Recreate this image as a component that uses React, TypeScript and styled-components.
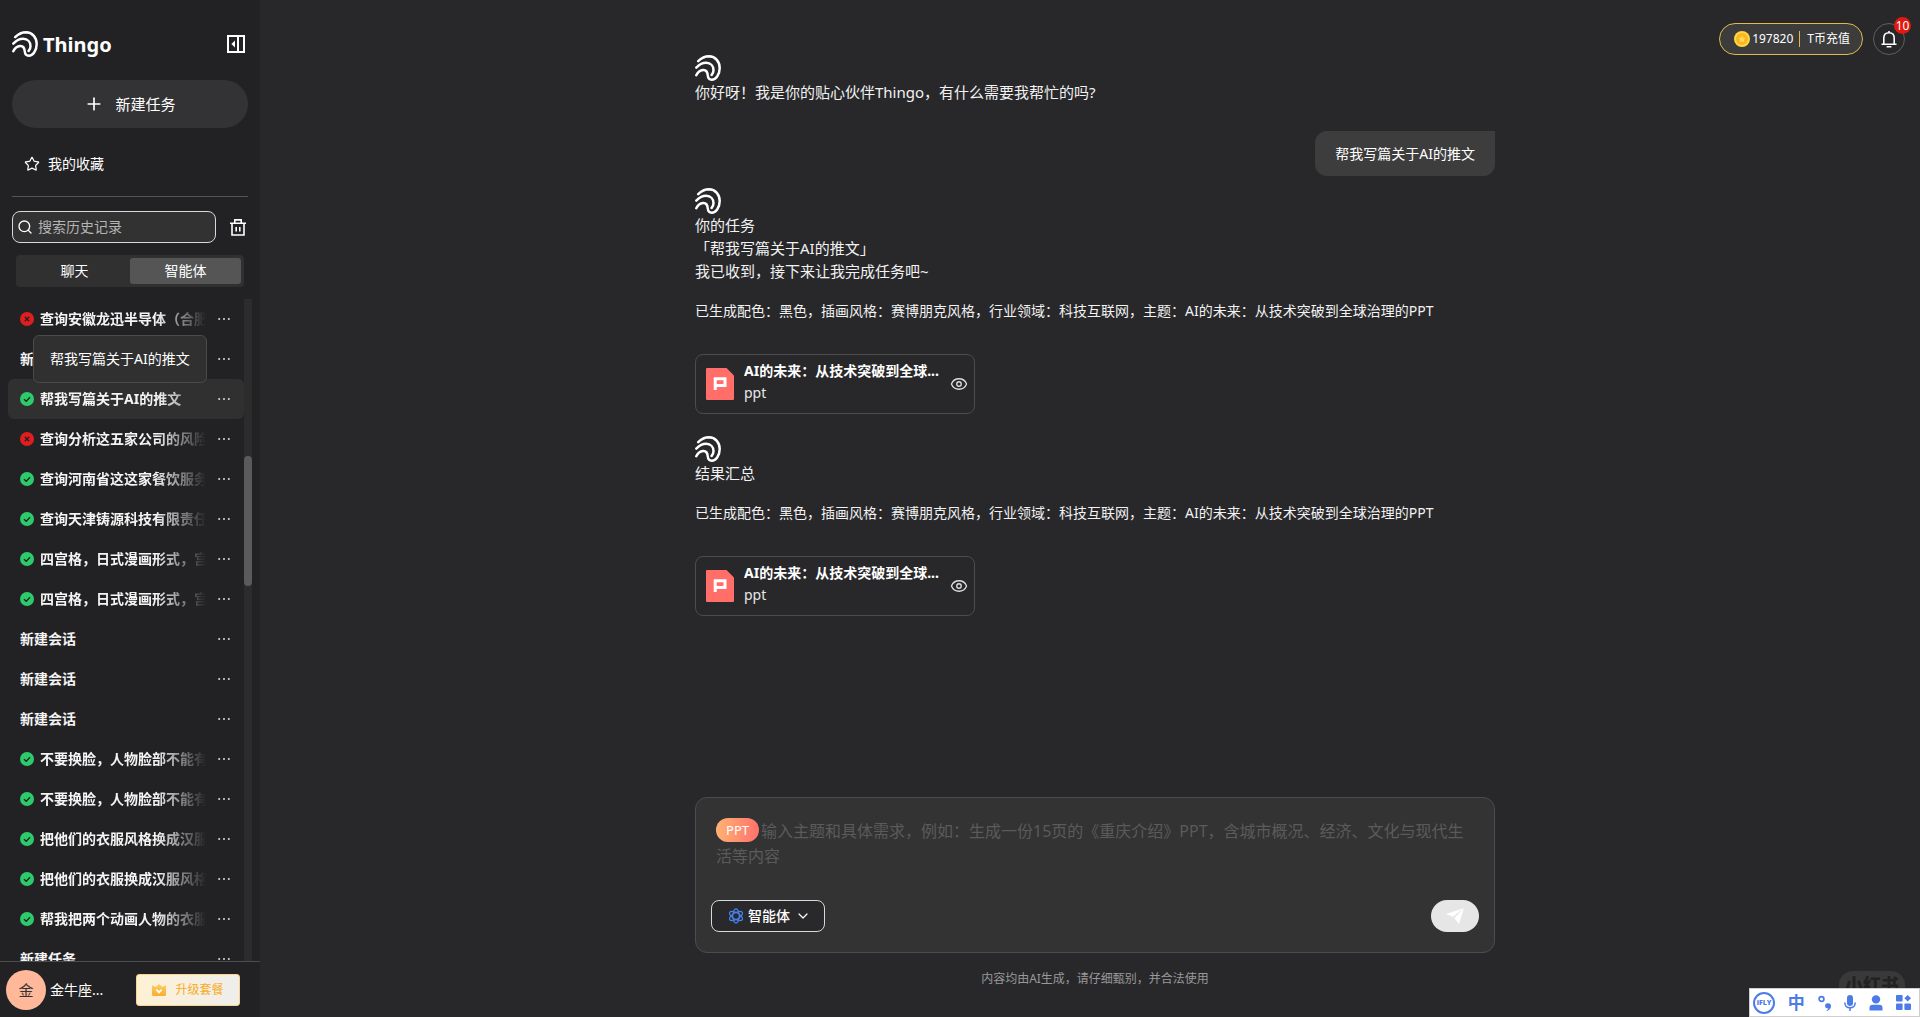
import React from 'react';
import styled, { createGlobalStyle, css } from 'styled-components';
import { ChevronDown, Eye, Plus, Search, Star } from 'lucide-react';

const GlobalStyle = createGlobalStyle`
  *, *::before, *::after { box-sizing: border-box; }
  body {
    margin: 0;
    background: #28282a;
    color: #fff;
    font: 14px/22px "Noto Sans", "Noto Sans CJK SC", sans-serif;
  }
  button, input, select, textarea { font: inherit; color: inherit; }
  button { border: 0; padding: 0; background: none; cursor: pointer; }
  p, h1, ul { margin: 0; padding: 0; }
`;

/* ---------- shell ---------- */

const Shell = styled.div`
  display: flex;
  height: 100vh;
  overflow: hidden;
`;

const Sidebar = styled.aside`
  display: flex;
  flex-direction: column;
  flex: none;
  width: 260px;
  background: #222224;
`;

const Main = styled.main`
  position: relative;
  display: flex;
  flex: 1;
  flex-direction: column;
  align-items: center;
  min-width: 0;
  padding: 55px 0 28px 10px;
`;

/* ---------- sidebar ---------- */

const SidebarTop = styled.div`
  display: flex;
  flex-direction: column;
  padding: 28px 12px 0;
`;

const BrandRow = styled.div`
  display: flex;
  align-items: center;
  justify-content: space-between;
  height: 32px;
  padding-right: 3px;
`;

const Brand = styled.h1`
  display: flex;
  align-items: center;
  gap: 5px;
  font-size: 20px;
  line-height: 32px;
  font-weight: 700;
`;

const BrandName = styled.span`
  padding-top: 2px;
`;

const IconButton = styled.button`
  display: flex;
  align-items: center;
  justify-content: center;
`;

const NewTask = styled.button`
  display: flex;
  align-items: center;
  justify-content: center;
  gap: 11px;
  height: 48px;
  margin-top: 20px;
  border-radius: 24px;
  background: #333335;
  font-size: 15px;
`;

const Favorites = styled.a`
  display: flex;
  align-items: center;
  gap: 8px;
  height: 40px;
  margin: 16px 0 12px;
  padding-left: 12px;
  color: inherit;
  text-decoration: none;
`;

const Divider = styled.hr`
  width: 100%;
  margin: 0;
  border: 0;
  border-top: 1px solid #555;
`;

const SearchRow = styled.div`
  display: flex;
  align-items: center;
  justify-content: space-between;
  margin-top: 14px;
  padding-right: 2px;
`;

const SearchBox = styled.label`
  display: flex;
  align-items: center;
  gap: 5px;
  width: 204px;
  height: 32px;
  padding: 0 4px;
  border: 1px solid #d8d8d8;
  border-radius: 8px;
  background: #323233;
`;

const SearchInput = styled.input`
  flex: 1;
  min-width: 0;
  padding: 0;
  border: 0;
  outline: 0;
  background: none;
  &::placeholder { color: #b4b4b4; opacity: 1; }
`;

const Tabs = styled.div`
  display: flex;
  margin: 12px 4px;
  padding: 3px;
  border-radius: 4px;
  background: #303031;
`;

const Tab = styled.button<{ $active?: boolean }>`
  flex: 1;
  height: 26px;
  border-radius: 3px;
  background: ${p => (p.$active ? '#555' : 'transparent')};
`;

const History = styled.div`
  display: flex;
  flex: 1;
  min-height: 0;
  padding: 0 8px;
`;

const TaskList = styled.ul`
  flex: 1;
  min-width: 0;
  overflow: hidden;
  list-style: none;
`;

const TaskRow = styled.li<{ $active?: boolean }>`
  position: relative;
  display: flex;
  align-items: center;
  gap: 6px;
  height: 40px;
  padding: 0 14px 0 12px;
  border-radius: 6px;
  background: ${p => (p.$active ? '#303031' : 'transparent')};
`;

const TaskTitle = styled.span<{ $fade: 'none' | 'short' | 'long' }>`
  flex: 1;
  min-width: 0;
  overflow: hidden;
  white-space: nowrap;
  font-weight: 700;
  color: #f4f4f4;
  ${p => p.$fade !== 'none' && css`
    mask-image: linear-gradient(to right, #000 70%, ${p.$fade === 'short' ? 'rgba(0, 0, 0, 0.3)' : 'transparent'} 100%);
  `}
`;

const MoreButton = styled.button`
  display: flex;
  align-items: center;
  justify-content: flex-end;
  width: 18px;
  height: 20px;
`;

const Tooltip = styled.div`
  position: absolute;
  z-index: 2;
  left: 25px;
  bottom: calc(100% - 4px);
  padding: 12px 16px;
  border: 1px solid #4b4b4b;
  border-radius: 6px;
  background: #303030;
  white-space: nowrap;
`;

const ScrollTrack = styled.div`
  width: 8px;
  background: #2c2c2d;
`;

const ScrollThumb = styled.div`
  height: 130px;
  margin-top: 157px;
  border-radius: 4px;
  background: #5a5a5a;
`;

const Account = styled.footer`
  display: flex;
  align-items: center;
  height: 56px;
  padding: 0 20px 0 6px;
  border-top: 1px solid #4d4d4f;
`;

const Avatar = styled.span`
  display: flex;
  align-items: center;
  justify-content: center;
  width: 40px;
  height: 40px;
  margin-right: 4px;
  border-radius: 50%;
  background: #ffb899;
  color: #333;
  font-size: 15px;
`;

const Upgrade = styled.button`
  display: flex;
  align-items: center;
  justify-content: center;
  gap: 9px;
  width: 104px;
  height: 32px;
  margin-left: auto;
  border: 1px solid #fbd48c;
  border-radius: 3px;
  background: linear-gradient(100deg, #fff1d3, #eeeeee);
  color: #f8ab1c;
  font-size: 12px;
`;

/* ---------- top right ---------- */

const TopBar = styled.div`
  position: absolute;
  top: 23px;
  right: 15px;
  display: flex;
  gap: 10px;
`;

const Wallet = styled.button`
  display: flex;
  align-items: center;
  height: 32px;
  padding: 0 12px 0 14px;
  border: 1px solid #e0b94a;
  border-radius: 16px;
  background: #3c3c3c;
  font-size: 12px;
`;

const Balance = styled.span`
  margin-left: 2px;
  padding-right: 6px;
`;

const WalletRule = styled.span`
  width: 1px;
  height: 16px;
  margin-right: 7px;
  background: #e0b94a;
`;

const BellButton = styled.button`
  position: relative;
  display: flex;
  align-items: center;
  justify-content: center;
  width: 32px;
  height: 32px;
  border: 1px solid #5e5e60;
  border-radius: 50%;
`;

const Badge = styled.span`
  position: absolute;
  top: -7px;
  right: -7px;
  width: 17px;
  height: 17px;
  border-radius: 50%;
  background: #e3180f;
  font-size: 12px;
  line-height: 17px;
  text-align: center;
`;

/* ---------- conversation ---------- */

const Thread = styled.section`
  display: flex;
  flex: 1;
  flex-direction: column;
  width: 100%;
  max-width: 800px;
  min-height: 0;
`;

const Reply = styled.article`
  display: flex;
  flex-direction: column;
  align-items: flex-start;
  margin-bottom: 22px;
`;

const ReplyText = styled.p`
  font-size: 15px;
  line-height: 23px;
  color: #f2f2f2;
`;

const Detail = styled.p`
  margin: 17px 0 32px;
  color: #f2f2f2;
`;

const Bubble = styled.p`
  align-self: flex-end;
  margin: 5px 0 12px;
  padding: 12px 20px 11px;
  border-radius: 12px 0 12px 12px;
  background: #3d3d3d;
`;

const FileCard = styled.div`
  display: flex;
  align-items: center;
  width: 280px;
  height: 60px;
  padding: 0 6px 0 10px;
  border: 1px solid #4c4c4e;
  border-radius: 8px;
`;

const FileText = styled.div`
  flex: 1;
  min-width: 0;
  margin: 0 8px 4px 10px;
`;

const FileName = styled.p`
  overflow: hidden;
  white-space: nowrap;
  font-weight: 700;
`;

const FileKind = styled.p`
  color: #e8e8e8;
`;

/* ---------- composer ---------- */

const Composer = styled.form`
  display: flex;
  flex-direction: column;
  width: 100%;
  max-width: 800px;
  padding: 20px 15px;
  border: 1px solid #4c4c4e;
  border-radius: 12px;
  background: #333;
`;

const PromptBox = styled.div`
  position: relative;
  margin: 0 5px 14px;
`;

const Prompt = styled.textarea`
  display: block;
  width: 100%;
  height: 68px;
  padding: 1px 0 0;
  border: 0;
  outline: 0;
  resize: none;
  background: none;
  font-size: 16px;
  line-height: 25px;
  text-indent: 45px;
  &::placeholder { color: #5b5b5b; opacity: 1; }
`;

const Mode = styled.span`
  position: absolute;
  top: 0;
  left: 0;
  width: 43px;
  height: 24px;
  border-radius: 12px;
  background: linear-gradient(95deg, #ffb473, #ff706b);
  font-size: 13px;
  line-height: 24px;
  text-align: center;
`;

const ComposerBar = styled.div`
  display: flex;
  align-items: center;
  justify-content: space-between;
`;

const AgentPicker = styled.label`
  display: flex;
  align-items: center;
  gap: 5px;
  height: 32px;
  padding: 0 13px 0 17px;
  border: 1px solid #d8d8d8;
  border-radius: 8px;
  background: #29292b;
`;

const AgentSelect = styled.select`
  appearance: none;
  padding: 0;
  border: 0;
  outline: 0;
  background: none;
  font-weight: 500;
`;

const Send = styled.button`
  display: flex;
  align-items: center;
  justify-content: center;
  width: 48px;
  height: 32px;
  border-radius: 16px;
  background: #e6e6e6;
`;

const Disclaimer = styled.p`
  margin-top: 16px;
  font-size: 12px;
  line-height: 20px;
  color: #999;
`;

/* ---------- desktop overlays ---------- */

const Watermark = styled.div`
  position: fixed;
  right: 15px;
  bottom: 14px;
  width: 66px;
  height: 32px;
  border-radius: 14px;
  background: #39393a;
  color: #222223;
  font-size: 18px;
  line-height: 29px;
  font-weight: 900;
  text-align: center;
`;

const InputMethodBar = styled.div`
  position: fixed;
  right: 0;
  bottom: 0;
  display: flex;
  align-items: center;
  justify-content: space-between;
  width: 171px;
  height: 29px;
  padding: 0 8px 0 3px;
  border: 1px solid #cfcfcf;
  background: #fff;
  color: #4d7be8;
`;

const FlyMark = styled.span`
  display: flex;
  align-items: center;
  justify-content: center;
  width: 22px;
  height: 22px;
  border: 2px solid currentColor;
  border-radius: 50%;
  font-size: 7px;
  font-weight: 900;
`;

const Language = styled.span`
  font-size: 17px;
  font-weight: 700;
`;

/* ---------- drawings ---------- */

const Logo = () => (
  <svg width="26" height="26" viewBox="0 0 26 26" fill="none" stroke="#fff" strokeWidth="2.5" strokeLinecap="round" aria-hidden="true">
    <path d="M3.2 6.2C6.6 2.8 10.4 1.3 14 1.3C20.6 1.5 24.7 6.8 24.7 13C24.7 20 20.6 24.7 16.8 24.7C13.8 24.7 12.9 22.5 12.7 20C12.4 16.6 10.6 14.8 8 15C4.8 15.4 2.8 17.2 1.3 20.2" />
    <path d="M1.3 12.6C4.4 9.4 7.8 7.8 11.2 7.8C15.8 7.9 18.5 11.2 18.5 15C18.5 17.2 17.8 18.9 16.6 20" />
  </svg>
);

const CollapseIcon = () => (
  <svg width="18" height="18" viewBox="0 0 18 18" fill="none" stroke="#fff" strokeWidth="2" aria-hidden="true">
    <path d="M1 1H17V17H1ZM11 1V17" />
    <path d="M8 5.5V12.5L4.4 9Z" fill="#fff" stroke="none" />
  </svg>
);

const TrashIcon = () => (
  <svg width="16" height="17" viewBox="0 0 16 17" fill="none" stroke="#fff" strokeWidth="1.6" aria-hidden="true">
    <path d="M0 4.2H16M4.8 4V.9H11.2V4M2 4.5V16H14V4.5M6.2 8V12.6M9.8 8V12.6" />
  </svg>
);

const StatusIcon = ({ ok }: { ok: boolean }) => (
  <svg width="14" height="14" viewBox="0 0 14 14" fill="none" aria-label={ok ? '已完成' : '失败'}>
    <circle cx="7" cy="7" r="7" fill={ok ? '#2dcb6c' : '#e01e20'} />
    <path d={ok ? 'M4 7.2L6.2 9.3L10 5.2' : 'M4.8 4.8L9.2 9.2M9.2 4.8L4.8 9.2'} stroke="#222224" strokeWidth="1.3" />
  </svg>
);

const Dots = () => (
  <svg width="12" height="4" viewBox="0 0 12 4" fill="#ddd" aria-hidden="true">
    <circle cx="1.2" cy="2" r="1" />
    <circle cx="6" cy="2" r="1" />
    <circle cx="10.8" cy="2" r="1" />
  </svg>
);

const CrownIcon = () => (
  <svg width="14" height="12" viewBox="0 0 14 12" aria-hidden="true">
    <defs>
      <linearGradient id="crown" x1="0" y1="0" x2="0" y2="1">
        <stop offset="0" stopColor="#fdd064" />
        <stop offset="1" stopColor="#f9ad2d" />
      </linearGradient>
    </defs>
    <path d="M0 1.2L3.6 3L7 0L10.4 3L14 1.2V10.5Q14 12 12.5 12H1.5Q0 12 0 10.5Z" fill="url(#crown)" />
    <path d="M4.4 5.6L7 8.4L9.6 5.6" fill="none" stroke="#fff" strokeWidth="1.7" />
  </svg>
);

const CoinIcon = () => (
  <svg width="16" height="16" viewBox="0 0 16 16" aria-hidden="true">
    <circle cx="8" cy="8" r="8" fill="#ffd83f" />
    <circle cx="8" cy="8" r="6" fill="#f9b52a" />
    <path d="M8 4.2L9.1 6.7L11.8 7L9.8 8.8L10.4 11.5L8 10.1L5.6 11.5L6.2 8.8L4.2 7L6.9 6.7Z" fill="#ffdb4d" />
  </svg>
);

const BellIcon = () => (
  <svg width="16" height="17" viewBox="0 0 16 17" fill="none" stroke="#fff" strokeWidth="1.6" aria-hidden="true">
    <path d="M.5 13.2H15.5M2.8 13V7C2.8 3.8 5 1.8 8 1.8S13.2 3.8 13.2 7V13M8 0V2M5.6 15.8H10.4" />
  </svg>
);

const PptIcon = () => (
  <svg width="28" height="32" viewBox="0 0 28 32" aria-hidden="true">
    <path d="M1 0H20.5L28 7.5V31Q28 32 27 32H1Q0 32 0 31V1Q0 0 1 0Z" fill="#ff6e69" />
    <path d="M9.2 22V10.8H19V17.4H9.2" fill="none" stroke="#fff" strokeWidth="3" />
  </svg>
);

const AgentIcon = () => (
  <svg width="14" height="16" viewBox="0 0 14 16" fill="none" stroke="#4583f0" strokeWidth="1.2" aria-hidden="true">
    <ellipse cx="7" cy="8" rx="3.2" ry="7.2" />
    <ellipse cx="7" cy="8" rx="3.2" ry="7.2" transform="rotate(60 7 8)" />
    <ellipse cx="7" cy="8" rx="3.2" ry="7.2" transform="rotate(120 7 8)" />
    <circle cx="7" cy="8" r="3.4" fill="#29292b" />
  </svg>
);

const PlaneIcon = () => (
  <svg width="18" height="16" viewBox="0 0 18 16" fill="#fff" aria-hidden="true">
    <path d="M0 6L18 0L7 8.8Z" />
    <path d="M18 0L13 16L8.4 10.2Z" />
  </svg>
);

const PunctuationIcon = () => (
  <svg width="14" height="16" viewBox="0 0 14 16" aria-hidden="true">
    <circle cx="3.5" cy="4" r="2.4" fill="none" stroke="currentColor" strokeWidth="1.7" />
    <path d="M10.3 8.2A2.7 2.7 0 1 0 10.6 13.4Q10 14.6 8.4 15.2L9 16Q13.3 14.4 13 10.8A2.7 2.7 0 0 0 10.3 8.2Z" fill="currentColor" />
  </svg>
);

const MicIcon = () => (
  <svg width="12" height="16" viewBox="0 0 12 16" fill="none" stroke="currentColor" strokeWidth="1.5" aria-hidden="true">
    <rect x="3" y="0" width="6" height="11" rx="3" fill="currentColor" stroke="none" />
    <path d="M.8 7.5Q1 12.8 6 12.8T11.2 7.5M6 13V16" />
  </svg>
);

const PersonIcon = () => (
  <svg width="14" height="16" viewBox="0 0 14 16" fill="currentColor" aria-hidden="true">
    <circle cx="7" cy="4.4" r="4.2" />
    <path d="M.5 15.5V13Q.5 9.8 3.8 9.8H10.2Q13.5 9.8 13.5 13V15.5Z" />
  </svg>
);

const AppsIcon = () => (
  <svg width="15" height="15" viewBox="0 0 15 15" fill="currentColor" aria-hidden="true">
    <rect width="6.6" height="6.6" rx="1" />
    <rect y="8.4" width="6.6" height="6.6" rx="1" />
    <rect x="8.4" y="8.4" width="6.6" height="6.6" rx="1" />
    <path d="M11.7 0L15 3.3L11.7 6.6L8.4 3.3Z" />
  </svg>
);

/* ---------- content ---------- */

type Task = { title: string; status?: 'ok' | 'failed'; active?: boolean };

const tasks: Task[] = [
  { title: '查询安徽龙迅半导体（合肥', status: 'failed' },
  { title: '新建会话' },
  { title: '帮我写篇关于AI的推文', status: 'ok', active: true },
  { title: '查询分析这五家公司的风险', status: 'failed' },
  { title: '查询河南省这这家餐饮服务', status: 'ok' },
  { title: '查询天津铸源科技有限责任', status: 'ok' },
  { title: '四宫格，日式漫画形式，宫', status: 'ok' },
  { title: '四宫格，日式漫画形式，宫', status: 'ok' },
  { title: '新建会话' },
  { title: '新建会话' },
  { title: '新建会话' },
  { title: '不要换脸，人物脸部不能有', status: 'ok' },
  { title: '不要换脸，人物脸部不能有', status: 'ok' },
  { title: '把他们的衣服风格换成汉服', status: 'ok' },
  { title: '把他们的衣服换成汉服风格', status: 'ok' },
  { title: '帮我把两个动画人物的衣服', status: 'ok' },
  { title: '新建任务' },
];

const summary = '已生成配色：黑色，插画风格：赛博朋克风格，行业领域：科技互联网，主题：AI的未来：从技术突破到全球治理的PPT';

const PptCard = () => (
  <FileCard>
    <PptIcon />
    <FileText>
      <FileName>AI的未来：从技术突破到全球...</FileName>
      <FileKind>ppt</FileKind>
    </FileText>
    <IconButton type="button" aria-label="预览">
      <Eye size={18} strokeWidth={1.8} color="#ddd" />
    </IconButton>
  </FileCard>
);

export default function App() {
  return (
    <>
      <GlobalStyle />
      <Shell>
        <Sidebar>
          <SidebarTop>
            <BrandRow>
              <Brand><Logo /><BrandName>Thingo</BrandName></Brand>
              <IconButton type="button" aria-label="收起侧栏"><CollapseIcon /></IconButton>
            </BrandRow>
            <NewTask type="button"><Plus size={20} strokeWidth={2} />新建任务</NewTask>
            <Favorites href="#favorites"><Star size={16} strokeWidth={1.8} />我的收藏</Favorites>
            <Divider />
            <SearchRow>
              <SearchBox>
                <Search size={16} strokeWidth={2} />
                <SearchInput type="text" placeholder="搜索历史记录" aria-label="搜索历史记录" />
              </SearchBox>
              <IconButton type="button" aria-label="清空历史"><TrashIcon /></IconButton>
            </SearchRow>
            <Tabs>
              <Tab type="button">聊天</Tab>
              <Tab type="button" $active>智能体</Tab>
            </Tabs>
          </SidebarTop>
          <History>
            <TaskList>
              {tasks.map((task, i) => (
                <TaskRow key={i} $active={task.active}>
                  {task.status && <StatusIcon ok={task.status === 'ok'} />}
                  <TaskTitle $fade={!task.status ? 'none' : task.active ? 'short' : 'long'}>{task.title}</TaskTitle>
                  <MoreButton type="button" aria-label="更多"><Dots /></MoreButton>
                  {task.active && <Tooltip role="tooltip">{task.title}</Tooltip>}
                </TaskRow>
              ))}
            </TaskList>
            <ScrollTrack><ScrollThumb /></ScrollTrack>
          </History>
          <Account>
            <Avatar>金</Avatar>
            <span>金牛座...</span>
            <Upgrade type="button"><CrownIcon />升级套餐</Upgrade>
          </Account>
        </Sidebar>

        <Main>
          <TopBar>
            <Wallet type="button">
              <CoinIcon />
              <Balance>197820</Balance>
              <WalletRule />
              T币充值
            </Wallet>
            <BellButton type="button" aria-label="通知"><BellIcon /><Badge>10</Badge></BellButton>
          </TopBar>

          <Thread>
            <Reply>
              <Logo />
              <ReplyText>你好呀！我是你的贴心伙伴Thingo，有什么需要我帮忙的吗?</ReplyText>
            </Reply>
            <Bubble>帮我写篇关于AI的推文</Bubble>
            <Reply>
              <Logo />
              <ReplyText>你的任务</ReplyText>
              <ReplyText>「帮我写篇关于AI的推文」</ReplyText>
              <ReplyText>我已收到，接下来让我完成任务吧~</ReplyText>
              <Detail>{summary}</Detail>
              <PptCard />
            </Reply>
            <Reply>
              <Logo />
              <ReplyText>结果汇总</ReplyText>
              <Detail>{summary}</Detail>
              <PptCard />
            </Reply>
          </Thread>

          <Composer>
            <PromptBox>
              <Mode>PPT</Mode>
              <Prompt
                aria-label="输入需求"
                placeholder="输入主题和具体需求，例如：生成一份15页的《重庆介绍》PPT，含城市概况、经济、文化与现代生活等内容"
              />
            </PromptBox>
            <ComposerBar>
              <AgentPicker>
                <AgentIcon />
                <AgentSelect aria-label="模式"><option>智能体</option></AgentSelect>
                <ChevronDown size={16} strokeWidth={1.8} />
              </AgentPicker>
              <Send type="button" aria-label="发送"><PlaneIcon /></Send>
            </ComposerBar>
          </Composer>
          <Disclaimer>内容均由AI生成，请仔细甄别，并合法使用</Disclaimer>
        </Main>
      </Shell>

      <Watermark>小红书</Watermark>
      <InputMethodBar>
        <FlyMark>iFLY</FlyMark>
        <Language>中</Language>
        <PunctuationIcon />
        <MicIcon />
        <PersonIcon />
        <AppsIcon />
      </InputMethodBar>
    </>
  );
}
